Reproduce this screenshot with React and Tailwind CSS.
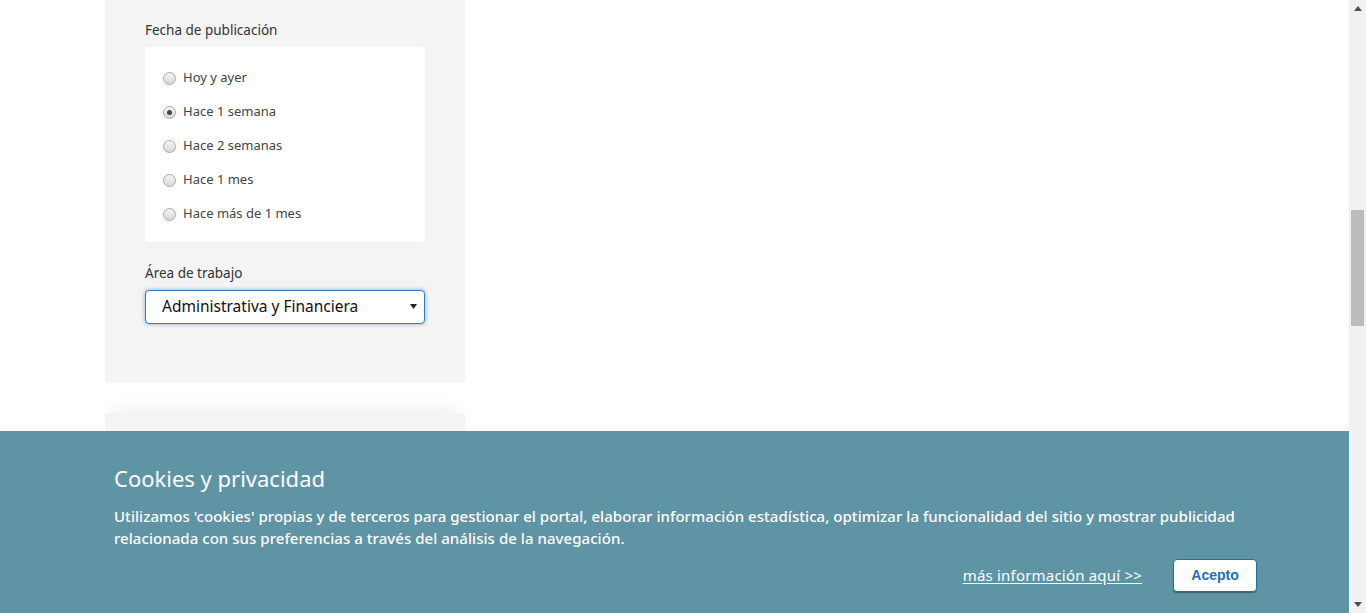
import React from "react";

const font = { fontFamily: '"Noto Sans", "Open Sans", sans-serif' };

function Radio({ checked }) {
  return (
    <span className="relative inline-block w-[13px] h-[13px] rounded-full border border-[#a9a9a9] bg-gradient-to-b from-[#f4f4f4] to-[#d8d8d8] shrink-0">
      {checked && (
        <span className="absolute left-[3px] top-[3px] w-[5px] h-[5px] rounded-full bg-[#444]" />
      )}
    </span>
  );
}

export default function App() {
  const options = [
    ["Hoy y ayer", false],
    ["Hace 1 semana", true],
    ["Hace 2 semanas", false],
    ["Hace 1 mes", false],
    ["Hace más de 1 mes", false],
  ];
  return (
    <div className="flex w-[1366px] h-[613px] overflow-hidden bg-white" style={font}>
      <div className="relative flex-1 h-full">
        <div className="pl-[105px] flex flex-col">
          <div className="w-[360px] h-[383px] bg-[#f4f4f4] rounded-b-[3px] px-[40px] pt-[20px]">
            <div className="text-[13.5px] leading-[20px] text-[#333]">Fecha de publicación</div>
            <div className="mt-[7px] bg-white rounded-[4px] h-[195px] pt-[21px] pl-[18px] flex flex-col gap-[14px]">
              {options.map(([label, checked]) => (
                <label key={label} className="flex items-center gap-[7px] h-[20px] text-[13px] text-[#444]">
                  <Radio checked={checked} />
                  <span>{label}</span>
                </label>
              ))}
            </div>
            <div className="mt-[21px] text-[13.5px] leading-[20px] text-[#333]">Área de trabajo</div>
            <div className="mt-[7px] h-[34px] bg-white border border-[#2d7fc1] rounded-[4px] shadow-[0_0_4px_rgba(45,127,193,0.6)] flex items-center justify-between pl-[16px] pr-[6px]">
              <span className="text-[15.5px] text-[#111]">Administrativa y Financiera</span>
              <svg width="8" height="6" viewBox="0 0 8 6"><path d="M0 0h7L3.5 5z" fill="#222" /></svg>
            </div>
          </div>
          <div className="mt-[30px] w-[360px] h-[40px] bg-[#f4f4f4] shadow-[0_-12px_18px_-8px_rgba(0,0,0,0.07)]" />
        </div>
        <div className="absolute left-0 right-0 bottom-0 h-[182px] bg-[#5f94a4] pl-[114px] pr-[92px] pt-[32px] text-white">
          <div className="text-[22px] leading-[30px]">Cookies y privacidad</div>
          <p className="mt-[12px] text-[15px] leading-[22px] font-medium tracking-[0.05px]">
            Utilizamos 'cookies' propias y de terceros para gestionar el portal, elaborar información estadística, optimizar la funcionalidad del sitio y mostrar publicidad relacionada con sus preferencias a través del análisis de la navegación.
          </p>
          <div className="mt-[10px] flex items-center justify-end gap-[31px]">
            <a className="text-[15px] underline underline-offset-2 text-white tracking-[0.2px]">más información aquí &gt;&gt; </a>
            <button
              className="w-[84px] h-[33px] bg-white rounded-[4px] border border-[#1d6fb0] shadow-[0_1px_1px_rgba(0,0,0,0.35)] text-[#1d6fb0] text-[14px] font-bold"
              style={{ fontFamily: '"Liberation Sans", Arial, sans-serif' }}
            >
              Acepto
            </button>
          </div>
        </div>
      </div>
      <div className="w-[17px] h-full bg-[#f1f1f1] flex flex-col items-center">
        <div className="h-[17px] flex items-center justify-center">
          <svg width="8" height="5" viewBox="0 0 8 5"><path d="M4 0L8 5H0z" fill="#505050" /></svg>
        </div>
        <div className="mt-[193px] w-[13px] h-[116px] bg-[#bcbcbc]" />
        <div className="flex-1" />
        <div className="h-[17px] flex items-center justify-center">
          <svg width="8" height="5" viewBox="0 0 8 5"><path d="M0 0h8L4 5z" fill="#505050" /></svg>
        </div>
      </div>
    </div>
  );
}
